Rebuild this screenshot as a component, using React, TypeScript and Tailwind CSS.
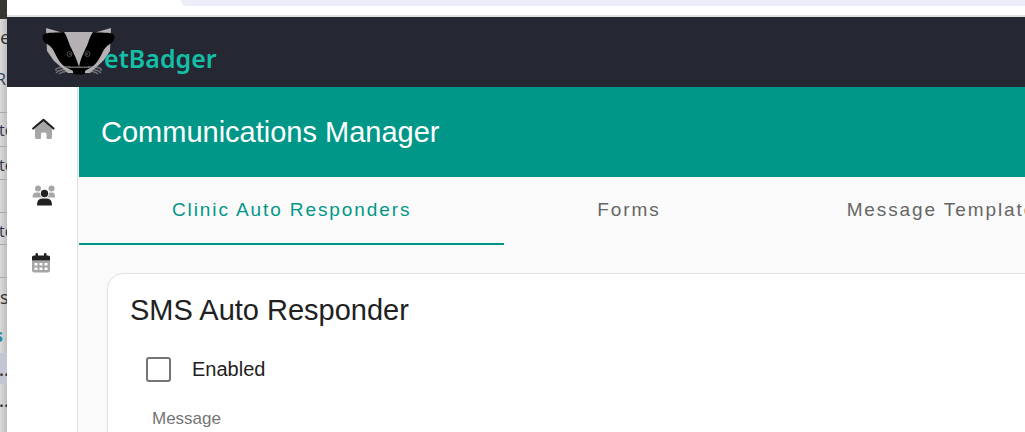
const BACKDROP_ROWS = [
  { text: "e", className: "h-[36px] items-center text-[19px] text-[#333333]" },
  { text: "RO", className: "h-[58px] -indent-1 items-start border-b border-[#a9a9a9] pt-3 text-base text-[#2c3e60]" },
  { text: "te", className: "h-[34px] -indent-px items-center border-b border-[#a9a9a9] text-base text-[#2c3350]" },
  { text: "te", className: "h-[33px] -indent-px items-center border-b border-[#a9a9a9] pt-1 text-base text-[#2c3350]" },
  { text: "", className: "h-[33px] items-center border-b border-[#a9a9a9]" },
  { text: "te", className: "h-[32px] -indent-px items-center border-b border-[#a9a9a9] pt-1 text-base text-[#2c3350]" },
  { text: "", className: "h-[33px] items-center border-b border-[#a9a9a9]" },
  { text: "s", className: "h-[38px] items-center text-lg text-[#333333]" },
  { text: "s", className: "h-[37px] -indent-1.5 items-center text-lg font-bold text-[#2f8aa5]" },
  { text: "...", className: "h-[31px] -indent-px items-center bg-[#c4c7d3] text-lg font-semibold text-[#333333]" },
  { text: "...", className: "h-[31px] -indent-px items-center text-lg font-semibold text-[#333333]" },
];

const TABS = ["Clinic Auto Responders", "Forms", "Message Templates"];

function BadgerLogo() {
  return (
    <svg width="74" height="50" viewBox="0 0 74 50" aria-hidden="true">
      <path d="M4 1 L18 5 H55 L69 1 L68 24 L62 33 L48 46 H26 L12 34 L5 24 Z" fill="#b4b0b4" />
      <path d="M22 5 C14 6 6 5 2 7 C-1 10 1 15 5 17 C11 20 12 25 16 32 C19 38 25 41 31 44 H37 V40 C34 29 30 24 27 16 C25 10 24 8 22 5 Z" fill="#000" />
      <path d="M51 5 C59 6 67 5 71 7 C74 10 72 15 68 17 C62 20 61 25 57 32 C54 38 48 41 43 44 H37 V40 C39 29 43 24 46 16 C48 10 49 8 51 5 Z" fill="#000" />
      <g fill="none" stroke="#514f51" strokeWidth="1">
        <circle cx="27.500" cy="27" r="2.500" />
        <circle cx="45.500" cy="27" r="2.500" />
        <circle cx="28" cy="27" r="0.700" />
        <circle cx="45" cy="27" r="0.700" />
      </g>
      <g fill="none" stroke="#a5a3a8" strokeWidth="1.500" opacity="0.600">
        <path d="M28 40 H22 Q17 40 14 42 V44 M27 42 Q18 42 14 46 M28 44 Q21 44 17 47" />
        <path d="M46 40 H52 Q57 40 59 42 V44 M47 42 Q55 42 59 46 M46 44 Q52 44 56 47" />
      </g>
      <path d="M26 39.500 H48 L46 41 H28 Z" fill="#d0ced0" opacity="0.500" />
      <rect x="31" y="41" width="12" height="6.500" rx="2.500" fill="#000" />
    </svg>
  );
}

function HomeIcon() {
  return (
    <svg width="24" height="22" viewBox="0 0 24 22" aria-hidden="true">
      <path d="M3 10.500 L11.500 3.500 L20 10.500 V19 Q20 21 18.500 21 H15.500 Q14.500 21 14.500 20 V16 Q14.500 14.500 13 14.500 H10.500 Q9 14.500 9 16 V20 Q9 21 8 21 H4.500 Q3 21 3 19 Z" fill="#a6a6a6" />
      <path d="M1.200 10.500 L11.500 1.800 L21.500 10.500" fill="none" stroke="#212121" strokeWidth="2.200" strokeLinecap="round" strokeLinejoin="round" />
    </svg>
  );
}

function UsersIcon() {
  return (
    <svg width="24" height="22" viewBox="0 0 24 22" aria-hidden="true">
      <g fill="#a6a6a6">
        <circle cx="6" cy="3.500" r="3" />
        <circle cx="19.500" cy="3.500" r="3" />
        <path d="M0.500 12.500 Q0.500 7.500 4.500 7.500 H7 Q8 7.500 8 8.500 Q8 11 10 12.500 Z" />
        <path d="M23 12.500 Q23 7.500 20.500 7.500 H18 Q17 7.500 17 8.500 Q17 11 15 12.500 Z" />
      </g>
      <circle cx="12.500" cy="8.500" r="3.700" fill="#212121" />
      <path d="M5 20 Q5 13.500 10 13.500 H15 Q20 13.500 20 20 Q20 20.500 19 20.500 H6 Q5 20.500 5 20 Z" fill="#212121" />
    </svg>
  );
}

function CalendarIcon() {
  return (
    <svg width="18" height="20" viewBox="0 0 18 20" aria-hidden="true">
      <path d="M0 7.500 H18 V17.500 Q18 19.500 16 19.500 H2 Q0 19.500 0 17.500 Z" fill="#a6a6a6" />
      <path d="M0 7.500 V4 Q0 2.500 2 2.500 H3.500 V1 Q3.500 0 4.700 0 Q6 0 6 1 V2.500 H12 V1 Q12 0 13.300 0 Q14.500 0 14.500 1 V2.500 H16 Q18 2.500 18 4 V7.500 Z" fill="#212121" />
      <g fill="#fff">
        {[10, 14.5].map((y) =>
          [2.5, 7.5, 12.5].map((x) => <rect key={`${x}-${y}`} x={x} y={y} width="3" height="2.500" rx="0.500" />)
        )}
      </g>
    </svg>
  );
}

const NAV = [
  { label: "Home", icon: <HomeIcon /> },
  { label: "Clients", icon: <UsersIcon /> },
  { label: "Calendar", icon: <CalendarIcon /> },
];

export default function App() {
  return (
    <div className="flex h-screen overflow-hidden bg-white font-['Liberation_Sans',Arial,sans-serif] text-[#212121]">
      <div aria-hidden="true" className="w-[7px] shrink-0 overflow-hidden bg-linear-to-r from-[#dadada] to-[#bebebe] font-['Open_Sans',sans-serif]">
        <div className="h-[19px] bg-[#383633]" />
        {BACKDROP_ROWS.map((row, i) => (
          <div key={i} className={`flex whitespace-nowrap ${row.className}`}>
            <span>{row.text}</span>
          </div>
        ))}
      </div>

      <div className="flex min-w-0 grow flex-col">
        <div className="h-[17px] shrink-0 border-b-2 border-[#e0e2df] bg-white pl-[174px]">
          <div className="h-[6px] rounded-bl-2xl bg-[#ebeef8]" />
        </div>

        <header className="flex h-[70px] shrink-0 items-center bg-[#252733] pl-[35px]">
          <a href="#" aria-label="VetBadger" className="flex items-center">
            <BadgerLogo />
            <span className="-ml-3 pt-3 font-['Noto_Sans',sans-serif] text-[25px] leading-8 font-semibold text-[#13bfa6]">
              etBadger
            </span>
          </a>
        </header>

        <div className="flex min-h-0 grow">
          <nav className="flex w-[71px] shrink-0 flex-col gap-[45px] border-r border-[#e0e0e0] pt-[31px] pl-[25px]">
            {NAV.map((item) => (
              <a key={item.label} href="#" aria-label={item.label} className="flex h-[22px] items-center">
                {item.icon}
              </a>
            ))}
          </nav>

          <main className="min-w-0 grow overflow-hidden bg-[#fafafa] pl-px">
            <div className="flex h-[90px] items-center bg-[#009788] px-[22px]">
              <h1 className="text-[29px] leading-10 text-white">Communications Manager</h1>
            </div>

            <div role="tablist" className="flex h-[68px] overflow-hidden">
              {TABS.map((tab, i) => (
                <button
                  key={tab}
                  type="button"
                  role="tab"
                  aria-selected={i === 0}
                  className={`shrink-0 border-b-2 px-[93px] text-[19px] tracking-widest whitespace-nowrap ${
                    i === 0 ? "border-[#009788] text-[#009788]" : "border-transparent text-[#666666]"
                  }`}
                >
                  {tab}
                </button>
              ))}
            </div>

            <section className="mt-7 -mr-4 ml-7 rounded-2xl border border-[#e0e0e0] bg-white px-[22px] pt-4 pb-8">
              <h2 className="text-[29px] leading-10">SMS Auto Responder</h2>
              <label className="mt-[19px] ml-4 flex items-center gap-[21px] text-[20px] leading-10">
                <input type="checkbox" className="size-[25px] appearance-none rounded-[3px] border-2 border-[#757575] bg-white" />
                Enabled
              </label>
              <label htmlFor="message" className="mt-[18px] ml-[22px] block text-[17px] leading-6 text-[#757575]">
                Message
              </label>
              <textarea id="message" className="ml-[22px] block w-full resize-none outline-none" />
            </section>
          </main>
        </div>
      </div>
    </div>
  );
}
